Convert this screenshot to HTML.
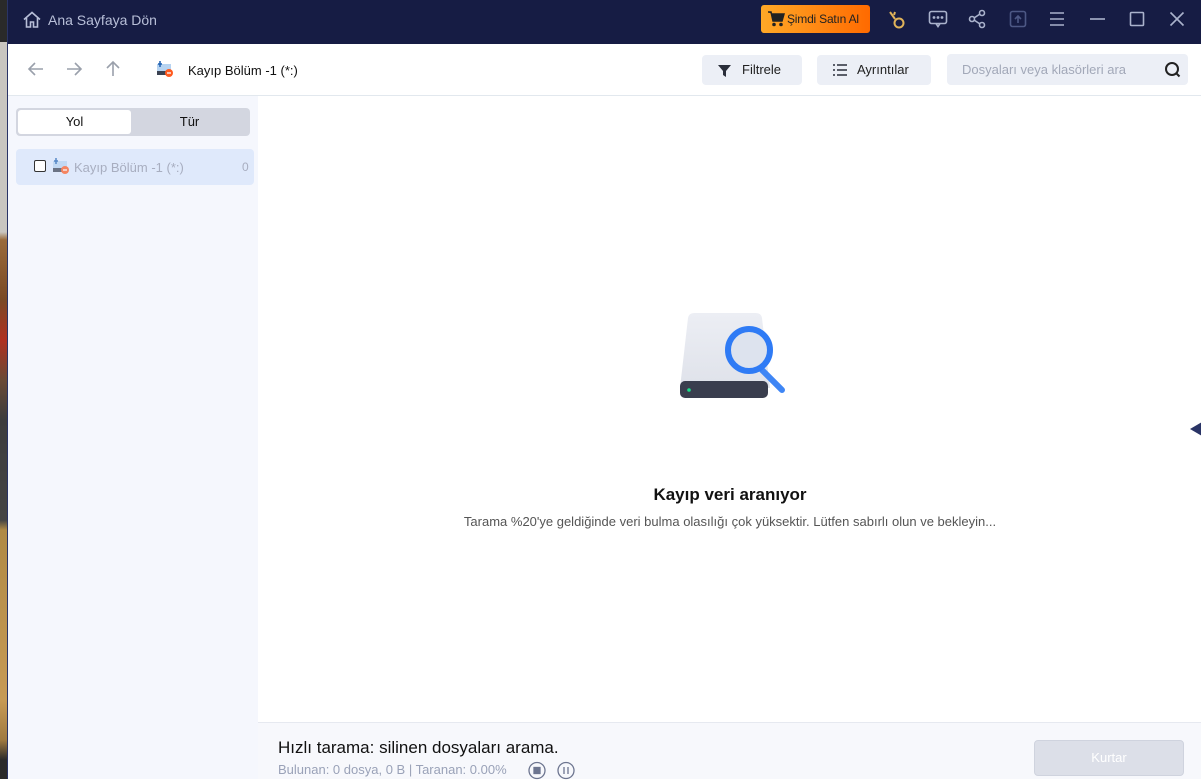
<!DOCTYPE html>
<html><head><meta charset="utf-8"><style>
*{margin:0;padding:0;box-sizing:border-box}
body{width:1201px;height:779px;overflow:hidden;font-family:"Liberation Sans","DejaVu Sans",sans-serif;position:relative;background:#fff}
.strip{position:absolute;left:0;top:0;width:7px;height:779px;background:linear-gradient(#2a2a2a 0,#2a2a2a 42px,#c9c6c0 42px,#c9c6c0 232px,#9a6a3a 240px,#7a4a25 300px,#b03020 340px,#6a4a35 380px,#3d3d3d 420px,#444 520px,#b08a45 530px,#c79a55 700px,#a07a40 740px,#2a2a2a 760px)}
.app{position:absolute;left:7px;top:0;width:1194px;height:779px;border-left:1px solid #2a3466}
.title{position:absolute;left:0;top:0;width:100%;height:44px;background:#161c44}
.t{position:absolute;color:#fff;font-size:13px}
.tool{position:absolute;top:44px;left:0;width:100%;height:52px;background:#fff;border-bottom:1px solid #e2e8ee}
.btn{position:absolute;top:11px;height:30px;background:#eceff6;border-radius:4px;font-size:13px;color:#222;line-height:30px;white-space:nowrap}
.side{position:absolute;left:0;top:96px;width:250px;height:683px;background:#f5f7fd}
.bottom{position:absolute;left:250px;top:722px;width:944px;height:57px;background:#f7f8fc;border-top:1px solid #e6e9f0}
</style></head><body>
<div class="strip"></div>
<div class="app">
<div class="title">
<svg style="position:absolute;left:14px;top:10px" width="20" height="20" viewBox="0 0 20 20" fill="none" stroke="#b8bfd8" stroke-width="1.6"><path d="M2 9.5L10 2.5l8 7M4.5 8v9h4v-5h3v5h4V8"/></svg>
<div class="t" style="left:40px;top:12px;color:#b8bfd8;font-size:14px">Ana Sayfaya Dön</div>
<div style="position:absolute;left:753px;top:5px;width:109px;height:28px;border-radius:3px;background:linear-gradient(90deg,#ffa827,#ff6a00);font-size:12px;letter-spacing:-0.2px;white-space:nowrap;color:#222;line-height:28px;padding-left:26px">Şimdi Satın Al</div>
<svg style="position:absolute;left:759px;top:11px" width="18" height="16" viewBox="0 0 18 16"><path d="M1 1h3l2 9h9l2-7H5" fill="#222" stroke="#222" stroke-width="1.5"/><circle cx="7" cy="13.5" r="1.8" fill="#222"/><circle cx="14" cy="13.5" r="1.8" fill="#222"/></svg>
<svg style="position:absolute;left:880px;top:10px" width="22" height="20" viewBox="0 0 22 20" fill="none" stroke="#e0b35a" stroke-width="2"><path d="M2 2l5 7"/><circle cx="11" cy="13" r="4.5"/><path d="M7 2l-1 3"/></svg>
<svg style="position:absolute;left:920px;top:10px" width="20" height="18" viewBox="0 0 20 18" fill="none" stroke="#aab2cc" stroke-width="1.6"><rect x="1.5" y="1.5" width="17" height="12" rx="2"/><path d="M8 13.5l2 3 2-3"/><circle cx="6" cy="7.5" r=".6" fill="#aab2cc"/><circle cx="10" cy="7.5" r=".6" fill="#aab2cc"/><circle cx="14" cy="7.5" r=".6" fill="#aab2cc"/></svg>
<svg style="position:absolute;left:960px;top:9px" width="18" height="20" viewBox="0 0 18 20" fill="none" stroke="#aab2cc" stroke-width="1.6"><circle cx="14" cy="4" r="2.5"/><circle cx="4" cy="10" r="2.5"/><circle cx="14" cy="16" r="2.5"/><path d="M6 9l6-4M6 11l6 4"/></svg>
<svg style="position:absolute;left:1001px;top:10px" width="18" height="18" viewBox="0 0 18 18" fill="none" stroke="#4d5885" stroke-width="1.6"><rect x="1.5" y="1.5" width="15" height="15" rx="2"/><path d="M9 13V6M6 9l3-3 3 3"/></svg>
<svg style="position:absolute;left:1041px;top:11px" width="16" height="16" viewBox="0 0 16 16" stroke="#aab2cc" stroke-width="1.6"><path d="M1 2h14M1 8h14M1 14h14"/></svg>
<svg style="position:absolute;left:1081px;top:11px" width="16" height="16" viewBox="0 0 16 16" stroke="#aab2cc" stroke-width="1.6"><path d="M1 8h15"/></svg>
<svg style="position:absolute;left:1121px;top:11px" width="16" height="16" viewBox="0 0 16 16" fill="none" stroke="#aab2cc" stroke-width="1.6"><rect x="1.5" y="1.5" width="13" height="13" rx="1"/></svg>
<svg style="position:absolute;left:1161px;top:11px" width="16" height="16" viewBox="0 0 16 16" stroke="#aab2cc" stroke-width="1.6"><path d="M1.5 1.5l13 13M14.5 1.5l-13 13"/></svg>
</div>
<div class="tool">
<svg style="position:absolute;left:19px;top:17px" width="18" height="16" viewBox="0 0 18 16" fill="none" stroke="#9aa0ab" stroke-width="1.6"><path d="M16 8H2M8 2L2 8l6 6"/></svg>
<svg style="position:absolute;left:57px;top:17px" width="18" height="16" viewBox="0 0 18 16" fill="none" stroke="#9aa0ab" stroke-width="1.6"><path d="M2 8h14M10 2l6 6-6 6"/></svg>
<svg style="position:absolute;left:97px;top:16px" width="16" height="18" viewBox="0 0 16 18" fill="none" stroke="#9aa0ab" stroke-width="1.6"><path d="M8 16V2M2 8l6-6 6 6"/></svg>
<svg style="position:absolute;left:148px;top:16px" width="18" height="18" viewBox="0 0 18 18"><rect x="1" y="4" width="14" height="9" fill="#b6d3f1"/><path d="M4 1v6M2 4h4" stroke="#1d5fb0" stroke-width="1.5"/><rect x="1" y="11" width="9" height="4" fill="#3b4252"/><circle cx="13" cy="13" r="4" fill="#ff5a1f"/><path d="M11 13h4" stroke="#fff" stroke-width="1.3"/></svg>
<div style="position:absolute;left:180px;top:19px;font-size:13px;color:#111">Kayıp Bölüm -1 (*:)</div>
<div class="btn" style="left:694px;width:100px;padding-left:40px">Filtrele</div>
<svg style="position:absolute;left:710px;top:21px" width="13" height="12" viewBox="0 0 13 12"><path d="M0 0h13L8 6v6l-3-2V6z" fill="#2a2e3a"/></svg>
<div class="btn" style="left:809px;width:114px;padding-left:40px">Ayrıntılar</div>
<svg style="position:absolute;left:825px;top:20px" width="14" height="12" viewBox="0 0 14 12" stroke="#2a2e3a" stroke-width="1.6"><path d="M0 1h2M4 1h10M0 6h2M4 6h10M0 11h2M4 11h10"/></svg>
<div class="btn" style="left:939px;top:10px;width:241px;height:31px;padding-left:15px;color:#a2a8b8;line-height:31px">Dosyaları veya klasörleri ara</div>
<svg style="position:absolute;left:1156px;top:17px" width="18" height="18" viewBox="0 0 18 18" fill="none" stroke="#222" stroke-width="2"><circle cx="8" cy="8" r="6"/><path d="M12.5 12.5l3 3"/></svg>
</div>
<div class="side">
<div style="position:absolute;left:8px;top:12px;width:234px;height:28px;background:#d3d6e0;border-radius:4px"></div>
<div style="position:absolute;left:10px;top:14px;width:113px;height:24px;background:#fff;border-radius:3px;text-align:center;line-height:24px;font-size:13px;color:#111">Yol</div>
<div style="position:absolute;left:123px;top:14px;width:117px;height:24px;text-align:center;line-height:24px;font-size:13px;color:#111">Tür</div>
<div style="position:absolute;left:8px;top:53px;width:238px;height:36px;background:#dfe9fb;border-radius:4px"></div>
<div style="position:absolute;left:26px;top:64px;width:12px;height:12px;border:1.3px solid #333;border-radius:2px;background:#fff"></div>
<svg style="position:absolute;left:44px;top:61px" width="18" height="18" viewBox="0 0 18 18" opacity=".7"><rect x="1" y="4" width="14" height="9" fill="#b6d3f1"/><path d="M4 1v6M2 4h4" stroke="#1d5fb0" stroke-width="1.5"/><rect x="1" y="11" width="9" height="4" fill="#3b4252"/><circle cx="13" cy="13" r="4" fill="#ff5a1f"/><path d="M11 13h4" stroke="#fff" stroke-width="1.3"/></svg>
<div style="position:absolute;left:66px;top:64px;font-size:13px;color:#a8aec0">Kayıp Bölüm -1 (*:)</div>
<div style="position:absolute;left:234px;top:64px;font-size:12px;color:#a8aec0">0</div>
</div>
<svg style="position:absolute;left:670px;top:310px" width="110" height="92" viewBox="0 0 110 92">
<defs><linearGradient id="g" x1="0" y1="0" x2="0" y2="1"><stop offset="0" stop-color="#eceef4"/><stop offset="1" stop-color="#dfe2ea"/></linearGradient></defs>
<path d="M10 8q1-5 6-5h62q5 0 6 5l8 70H2z" fill="url(#g)"/>
<rect x="2" y="71" width="88" height="17" rx="5" fill="#3a3e4e"/>
<circle cx="11" cy="80" r="1.8" fill="#19e08a"/>
<path d="M84 60l20 20" stroke="#3f86f5" stroke-width="6" stroke-linecap="round"/>
<circle cx="71" cy="40" r="21" fill="#dde3ee" stroke="#2f7bf5" stroke-width="6"/>
</svg>
<div style="position:absolute;left:250px;top:485px;width:944px;text-align:center;font-size:17px;font-weight:bold;color:#111">Kayıp veri aranıyor</div>
<div style="position:absolute;left:250px;top:514px;width:944px;text-align:center;font-size:13px;color:#555">Tarama %20'ye geldiğinde veri bulma olasılığı çok yüksektir. Lütfen sabırlı olun ve bekleyin...</div>
<svg style="position:absolute;left:1182px;top:421px" width="12" height="16" viewBox="0 0 12 16"><path d="M0 8L12 1v14z" fill="#2a3466"/></svg>
<div class="bottom">
<div style="position:absolute;left:20px;top:15px;font-size:17px;color:#111">Hızlı tarama: silinen dosyaları arama.</div>
<div style="position:absolute;left:20px;top:39px;font-size:13px;color:#9aa2b8">Bulunan: 0 dosya, 0 B | Taranan: 0.00%</div>
<svg style="position:absolute;left:270px;top:38px" width="50" height="19" viewBox="0 0 50 19" fill="none" stroke="#6d7590" stroke-width="1.3"><circle cx="9" cy="9.5" r="8"/><rect x="6" y="6.5" width="6" height="6" fill="#6d7590"/><circle cx="38" cy="9.5" r="8"/><path d="M36 6v7M40 6v7"/></svg>
<div style="position:absolute;left:776px;top:17px;width:150px;height:36px;background:#dcdfe8;border:1px solid #cfd3de;border-radius:4px;text-align:center;line-height:34px;color:#fff;font-size:13px">Kurtar</div>
</div>
</div>
</body></html>
